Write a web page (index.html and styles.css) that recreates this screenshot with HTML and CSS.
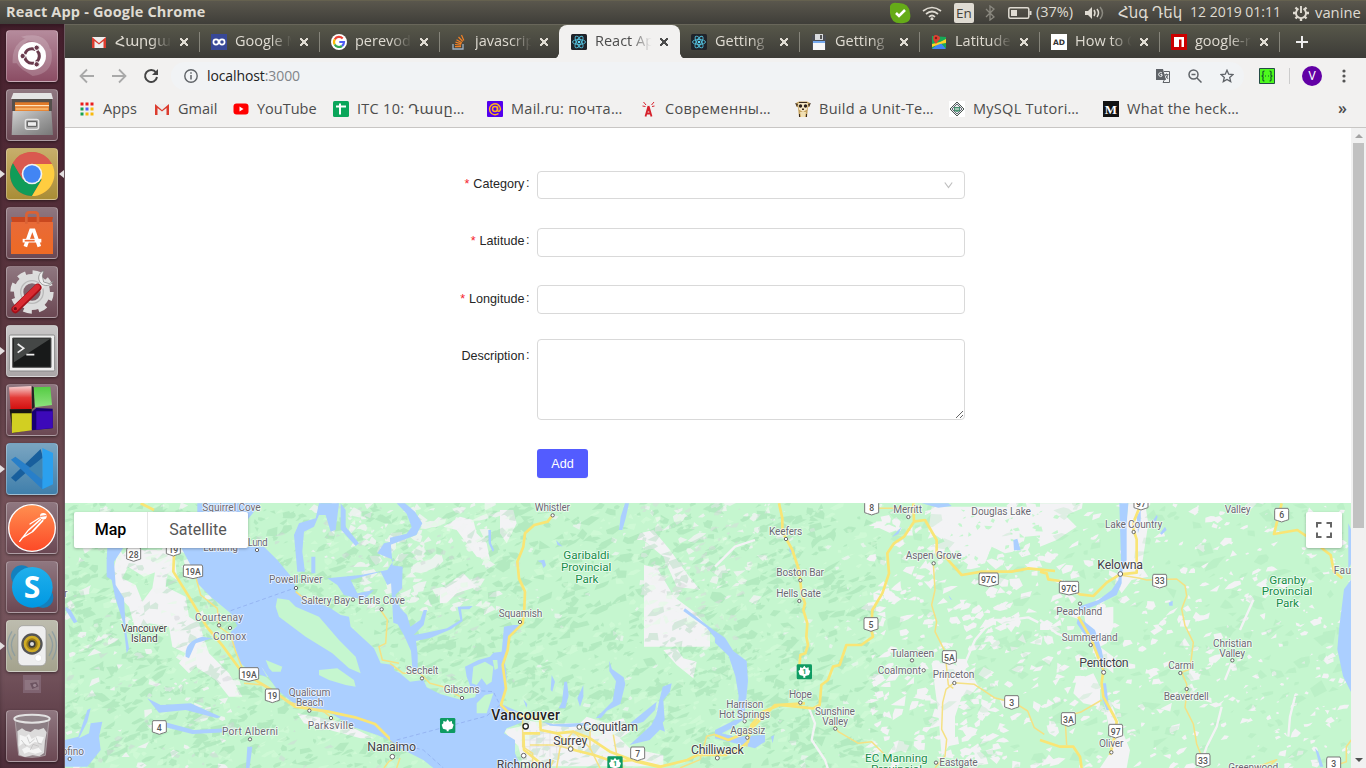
FILE: index.html
```html
<!DOCTYPE html>
<html lang="en">
<head>
<meta charset="utf-8">
<title>React App</title>
<link rel="stylesheet" href="styles.css">
</head>
<body>
<header class="panel">
  <span class="panel-title">React App - Google Chrome</span>
  <div class="tray">
    <svg class="i-skype" width="22" height="22" viewBox="0 0 22 22"><path d="M1 4Q3 0 8 1Q20 0 21 11Q23 20 15 21Q2 23 1 11Z" fill="#65ab18"/><path d="M7 11l3 3 6-6" fill="none" stroke="#fff" stroke-width="2.6"/></svg>
    <svg class="i-wifi" width="20" height="14" viewBox="0 0 20 14" fill="none" stroke="#dfdbd2" stroke-width="1.7"><path d="M1 5Q10-2 19 5M4 8Q10 3 16 8M7 11Q10 8 13 11"/><circle cx="10" cy="12.7" r=".7" fill="#dfdbd2"/></svg>
    <span class="lang">En</span>
    <svg class="i-bt" width="10" height="16" viewBox="0 0 10 16" fill="none" stroke="#8b8980" stroke-width="1.3"><path d="M1 4l8 8-4 3V1l4 3-8 8"/></svg>
    <svg class="i-bat" width="24" height="12" viewBox="0 0 24 12"><rect x=".8" y=".8" width="20" height="10.4" rx="1.5" fill="none" stroke="#dfdbd2" stroke-width="1.5"/><path d="M3 3h6v6H3z" fill="#dfdbd2"/><path d="M22.5 4v4" stroke="#dfdbd2" stroke-width="2"/></svg>
    <span class="pct">(37%)</span>
    <svg class="i-vol" width="20" height="14" viewBox="0 0 20 14" fill="none" stroke="#dfdbd2" stroke-width="1.5"><path d="M0 5h3l4-4v12L3 9H0z" fill="#dfdbd2" stroke="none"/><path d="M9 4q2 3 0 6M12 3q3 4 0 8"/><path d="M15 1q5 6 0 12" stroke="#8b8980"/></svg>
    <span class="date"><b class="hy">Հնգ Դեկ</b> <b>12 2019 01:11</b></span>
    <svg class="i-gear" width="16" height="16" viewBox="0 0 16 16" fill="none" stroke="#dfdbd2"><path d="M5.500 3.800a5 5 0 1 0 5 0M8 1v7" stroke-width="1.900"/><path d="M2.500 2.500l2 2M13.500 2.500l-2 2M0 8h3M13 8h3M2.500 13.500L4.500 11.500M13.500 13.500L11.500 11.500M8 13v3" stroke-width="2.400"/></svg>
    <span class="user">vanine</span>
  </div>
</header>

<div class="desktop">
<nav class="launcher">
  <div class="app a-dash"><svg viewBox="0 0 156 156"><g fill="#fff" fill-opacity=".18"><path d="M20 100Q15 20 100 18Q45 30 40 78L36 100zM45 20Q130 0 135 75L120 90Q125 40 70 32zM135 55Q150 130 80 138L60 125Q115 120 120 70zM120 110Q70 160 25 90L38 85Q60 130 110 115z"/></g><circle cx="78" cy="78" r="42" fill="#fff"/><circle cx="78" cy="78" r="22" fill="none" stroke="#6a3b4d" stroke-width="9" stroke-dasharray="40 6" stroke-dashoffset="18"/><g fill="#6a3b4d" stroke="#fff" stroke-width="3"><circle cx="50" cy="78" r="8"/><circle cx="92" cy="53" r="8"/><circle cx="92" cy="103" r="8"/></g></svg></div>
  <div class="app a-plum"><svg viewBox="0 0 156 156"><path d="M22 12h114l5 18H15z" fill="#e4e4e4"/><path d="M18 30h120v36H18z" fill="#55504c"/><path d="M27 40h102v31H27z" fill="#e17a28"/><path d="M27 48h102v4H27z" fill="#ffe3bd"/><path d="M29 56h98v8H29z" fill="#f7b064"/><path d="M20 66h116l5 72H17z" fill="url(#gGrey)"/><rect x="58" y="91" width="40" height="30" rx="6" fill="#aaa" stroke="#e6e6e6" stroke-width="4"/><path d="M64 98h28v14H64z" fill="#eee" stroke="#555" stroke-width="3"/></svg></div>
  <div class="app a-gold"><svg viewBox="0 0 156 156"><circle cx="78" cy="78" r="66" fill="#db4a3e"/><path d="M21 45A66 66 0 0 0 78 144L107 95 78 78 51 95z" fill="#109c58"/><path d="M78 144A66 66 0 0 0 138 48H78l29 47z" fill="#ffcd40"/><path d="M21 45L51 95 78 48H138Q118 12 78 12T21 45z" fill="#d9594f"/><circle cx="78" cy="78" r="31" fill="#f2f2f2"/><circle cx="78" cy="78" r="26" fill="#4285f4"/></svg><i class="pip left"></i><i class="pip right"></i></div>
  <div class="app a-plum"><svg viewBox="0 0 156 156"><path d="M15 30h126l-4 18H19z" fill="#c9481f"/><path d="M15 45h126v96H15z" fill="url(#gOrange)"/><path d="M61 50V26Q61 16 70 16H87Q96 16 96 26V50" fill="none" stroke="#d96235" stroke-width="8"/><path d="M58 119L75 70h8l17 49" fill="none" stroke="#fff" stroke-width="11"/><path d="M50 101h56" stroke="#fff" stroke-width="11"/><path d="M56 101h30" stroke="#ef6b35" stroke-width="5"/></svg></div>
  <div class="app a-plum"><svg viewBox="0 0 156 156"><circle cx="78" cy="78" r="56" fill="none" stroke="#dedede" stroke-width="18" stroke-dasharray="24 19.980"/><circle cx="78" cy="78" r="40" fill="none" stroke="#dcdcdc" stroke-width="28"/><circle cx="78" cy="78" r="34" fill="none" stroke="#b9b9b9" stroke-width="4"/><path d="M95 70L118 46" stroke="#e5e5e5" stroke-width="18"/><path d="M113 14a23 23 0 1 0 29 31l-12 8-17-5-4-18z" fill="#ededed" stroke="#777" stroke-width="2"/><path d="M28 130L95 65" stroke="#a50f18" stroke-width="23" stroke-linecap="round"/><path d="M28 128L94 63" stroke="#d92a31" stroke-width="16" stroke-linecap="round"/><circle cx="28" cy="128" r="5" fill="#741018"/></svg></div>
  <div class="app a-silver"><svg viewBox="0 0 156 156"><rect x="10" y="30" width="136" height="108" rx="4" fill="#eee" stroke="#888" stroke-width="3"/><path d="M20 39h115v88H20z" fill="#181a1a" stroke="#555" stroke-width="3"/><path d="M24 42h108L24 112z" fill="#444746"/><path d="M35 57l18 13-18 13M61 89h24" fill="none" stroke="#eee" stroke-width="5"/></svg><i class="pip left"></i></div>
  <div class="app a-plum"><svg viewBox="0 0 156 156"><path d="M9 10l68-4V75L14 76z" fill="url(#gRed)"/><path d="M83 10l50-2 5 55-52 7z" fill="url(#gGreen)"/><path d="M11 76l66-1v61l-57 12z" fill="#171513"/><path d="M17 88h60v51l-59 8z" fill="#d2cf22"/><path d="M78 83l13-11 49 2v59l-62 6z" fill="#180072"/><path d="M91 82h49v50l-49 5z" fill="#3c09b9"/><path d="M78 75l8-5-3-60-6-4z" fill="#232323"/></svg></div>
  <div class="app a-blue"><svg viewBox="0 0 156 156"><path d="M15 104L104 18l7 26-82 72z" fill="#185f9d"/><path d="M15 50l13-9 112 82-31 16z" fill="#287fc9"/><path d="M109 15l32 15v94l-32 15z" fill="#2ba0ee"/><path d="M109 45v65L68 77z" fill="#4085b2"/></svg><i class="pip left"></i></div>
  <div class="app a-plum"><svg viewBox="0 0 156 156"><circle cx="78" cy="78" r="70" fill="url(#gPost)" stroke="#fff" stroke-width="4"/><g fill="none" stroke="#fff" stroke-linecap="round"><circle cx="112" cy="43" r="10" fill="#fff" stroke="none"/><path d="M103 53L68 84M110 56L80 88" stroke-width="5"/><path d="M72 66L100 48M66 86L41 118M78 90L48 108" stroke-width="4"/><path d="M104 43l16-2" stroke="#ff7040" stroke-width="3"/></g></svg></div>
  <div class="app a-plum"><svg viewBox="0 0 156 156"><circle cx="47" cy="45" r="32" fill="#1480bd"/><circle cx="111" cy="110" r="31" fill="#1480bd"/><circle cx="79" cy="79" r="61" fill="url(#gSky)"/><text x="78" y="111" class="skype-s">S</text></svg></div>
  <div class="app a-sand"><svg viewBox="0 0 156 156"><g fill="none" stroke="#8197a0" stroke-width="4" opacity=".7"><path d="M28 42Q5 75 27 108M18 34Q-8 75 17 119M128 42Q151 75 129 108M138 34Q164 75 139 119"/></g><rect x="36" y="17" width="84" height="120" rx="15" fill="#eee" stroke="#999" stroke-width="2"/><circle cx="78" cy="72" r="32" fill="#555"/><circle cx="78" cy="72" r="25" fill="#d1ad25"/><circle cx="78" cy="72" r="17" fill="#9b7b16"/><circle cx="78" cy="72" r="11" fill="#3b3b3b"/><circle cx="78" cy="72" r="6" fill="#ddd"/><circle cx="97" cy="114" r="10" fill="#fff" stroke="#ccc"/></svg><i class="pip left"></i></div>
  <div class="mini"><svg viewBox="0 0 54 54"><path d="M5 15h43v30H5z" fill="#a08b98"/><path d="M21 25l19-4 7 13-19 8z" fill="#6c5867"/><circle cx="35" cy="31" r="5" fill="#b5a5b1"/></svg></div>
  <div class="app a-plum trash"><svg viewBox="0 0 156 156"><path d="M27 28h102l-11 108q-40 12-80 0z" fill="#8b7d83" stroke="#bcb3b7" stroke-width="2"/><path d="M34 64l14-9 11 7 15 4 12-9 12 2 15-5 9 13-5 25-3 37-14 10-20-3-23 5-17-6-4-28z" fill="#dcdbdb"/><path d="M41 74l17 6 11-8 8 15 17-9 20 4-8 18-20-4-17 11-18-7-11 9zM48 118l15-8 17 9 18-6 10 12-20 6-20-5-13 5z" fill="#f5f5f5"/><path d="M63 80l8 20 15-13M90 82l7 18 10 3M60 108l-14-18M73 120l8-17 18 6" fill="none" stroke="#bbb" stroke-width="2"/><ellipse cx="78" cy="26" rx="53" ry="12" fill="#918489" stroke="#e3e2e2" stroke-width="6"/></svg></div>
</nav>

<main class="browser">
  <div class="tabs">
    <div class="tab"><svg viewBox="0 0 16 16"><use href="#gmail"/></svg><span class="hy">Հարցա</span><i></i></div>
    <div class="tab"><svg viewBox="0 0 16 16"><path fill="#384897" d="M0 0h16v16H0z"/><g fill="none" stroke="#fff" stroke-width="1.700"><circle cx="5" cy="8" r="2.600"/><circle cx="11" cy="8" r="2.600"/></g></svg><span>Google M</span><i></i></div>
    <div class="tab"><svg viewBox="0 0 16 16"><circle cx="8" cy="8" r="8" fill="#fff"/><g fill="none" stroke-width="2.200"><path d="M3.800 5.300A5 5 0 0 1 11.700 4.500" stroke="#ea4335"/><path d="M3.700 10.500A5 5 0 0 1 3.800 5.300" stroke="#fbbc05"/><path d="M3.700 10.500A5 5 0 0 0 11 12" stroke="#34a853"/><path d="M11 12A5 5 0 0 0 13 8H8.300" stroke="#4d5cf5"/></g></svg><span>perevod</span><i></i></div>
    <div class="tab nosep"><svg viewBox="0 0 16 16"><path d="M2 10v5h10v-5" fill="none" stroke="#9fb1c4" stroke-width="1.300"/><path d="M4 12.700h6M4 10.500l6 .6M4.500 8.200l6 1.600M5.500 5.700l5.300 3.100M7.500 3l4.200 4.500M10.500 1l2.300 5.500" stroke="#f28025" stroke-width="1.200"/></svg><span>javascrip</span><i></i></div>
    <div class="tab active"><svg viewBox="0 0 16 16"><use href="#react"/></svg><span>React Ap</span><i></i></div>
    <div class="tab"><svg viewBox="0 0 16 16"><use href="#react"/></svg><span>Getting</span><i></i></div>
    <div class="tab"><svg viewBox="0 0 16 16"><path d="M1 1h14v15H1z" fill="#4b4d52"/><path d="M4 0h8v6H4z" fill="#d8dadd"/><path d="M9 1h2v4H9z" fill="#555"/><path d="M2 8h12v8H2z" fill="#f7f7f7"/><path d="M2 7h12v2H2z" fill="#75a9ed"/></svg><span>Getting</span><i></i></div>
    <div class="tab"><svg viewBox="0 0 16 16"><path d="M1 2l14 1v11l-14 1z" fill="#18a957"/><path d="M1 15L9 8l6 7z" fill="#4285f4"/><path d="M1 10l8-2 6-3v4l-6 1-8 3z" fill="#ffd327"/><path d="M5 10Q1 5 2.500 2.500T7.500 2 7 7z" fill="#de4033"/><circle cx="5" cy="4" r="1.200" fill="#851b16"/></svg><span>Latitude</span><i></i></div>
    <div class="tab"><svg viewBox="0 0 16 16"><path fill="#fff" d="M0 0h16v16H0z"/><text x="8" y="11" class="ad">AD</text></svg><span>How to C</span><i></i></div>
    <div class="tab"><svg viewBox="0 0 16 16"><path fill="#cb0000" d="M0 0h16v16H0z"/><path fill="#fff" d="M3 3h10v10h-2.500V5.500H8V13H3z"/></svg><span>google-r</span><i></i></div>
    <svg class="plus" width="12" height="12" viewBox="0 0 12 12"><path d="M6 0v12M0 6h12" stroke="#eee" stroke-width="2"/></svg>
  </div>

  <div class="toolbar">
    <svg class="nav-ic" viewBox="0 0 16 16"><path d="M15 8H2M8 1.500L1.500 8 8 14.500" stroke="#a9a9a9"/></svg>
    <svg class="nav-ic" viewBox="0 0 16 16"><path d="M1 8h13M8 1.500L14.500 8 8 14.500" stroke="#a9a9a9"/></svg>
    <svg class="nav-ic reload" viewBox="0 0 16 16"><path d="M13 4.500A6 6 0 1 0 14 9" stroke="#444" stroke-width="2"/><path d="M15 1v6H9z" fill="#444" stroke="none"/></svg>
    <div class="omnibox">
      <svg width="14" height="14" viewBox="0 0 14 14"><circle cx="7" cy="7" r="6.200" fill="none" stroke="#5f6368" stroke-width="1.400"/><path d="M7 6v4.500M7 3.300v1.500" stroke="#5f6368" stroke-width="1.500"/></svg>
      <span class="url">localhost<em>:3000</em></span>
      <svg class="o-tr" width="14" height="14" viewBox="0 0 14 14"><path d="M0 0h7l3 11H0z" fill="#5f6368"/><path d="M8 2.500h5.500v11H7l1.500-3" fill="none" stroke="#5f6368"/><path d="M6 4a2 2 0 1 0 0 3V5.500H4.500" fill="none" stroke="#f1f3f4"/><path d="M8.500 5.500h4M10.500 4.500v1M12 5.500Q11 9 9.500 9.500M9.500 6l2.500 4" fill="none" stroke="#5f6368" stroke-width=".9"/></svg>
      <svg class="o-zm" width="14" height="14" viewBox="0 0 14 14" fill="none" stroke="#5f6368" stroke-width="1.500"><circle cx="5.500" cy="5.500" r="4.500"/><path d="M9 9l4.500 4.500M3.500 5.500h4"/></svg>
      <svg width="14" height="14" viewBox="0 0 14 14"><path d="M7 1.200l1.700 4 4.300.4-3.300 2.800 1 4.200L7 10.400l-3.700 2.200 1-4.200L1 5.600l4.300-.4z" fill="none" stroke="#5f6368" stroke-width="1.300"/></svg>
    </div>
    <svg class="ext" width="16" height="16" viewBox="0 0 16 16"><path d="M.5.5h15v15H.5z" fill="#4df91d" stroke="#244b45"/><path d="M5.500 3q-2 0-1.500 2.500T2.500 8q2 0 1.500 2.500T5.500 13M10.500 3q2 0 1.500 2.500T13.500 8q-2 0-1.500 2.500T10.500 13M6 8h1M9 8h1" fill="none" stroke="#155a2a" stroke-width="1.200"/></svg>
    <span class="vsep"></span>
    <span class="avatar">V</span>
    <svg class="dots" width="4" height="14" viewBox="0 0 4 14" fill="#555"><circle cx="2" cy="2" r="1.600"/><circle cx="2" cy="7" r="1.600"/><circle cx="2" cy="12" r="1.600"/></svg>
  </div>

  <div class="bookmarks">
    <a class="bm w75"><svg viewBox="0 0 16 16"><path d="M1.500 1.500h3v3h-3zM6.500 1.500h3v3h-3zM11.500 1.500h3v3h-3z" fill="#ea1d1d"/><path d="M1.500 6.500h3v3h-3zM1.500 11.500h3v3h-3z" fill="#16a150"/><path d="M6.500 6.500h3v3h-3z" fill="#5260f2"/><path d="M11.500 6.500h3v3h-3zM6.500 11.500h3v3h-3zM11.500 11.500h3v3h-3z" fill="#f8b90c"/></svg><span>Apps</span></a>
    <a class="bm w79"><svg viewBox="0 0 16 16"><use href="#gmail"/></svg><span>Gmail</span></a>
    <a class="bm w100"><svg viewBox="0 0 16 16"><rect x=".5" y="2.500" width="15" height="11" rx="3" fill="#f00"/><path d="M6.500 5.500v5l4-2.500z" fill="#fff"/></svg><span>YouTube</span></a>
    <a class="bm"><svg viewBox="0 0 16 16"><rect width="16" height="16" rx="1.500" fill="#0aa65a"/><path d="M3 5.500h10M7 2.500v11" stroke="#fff" stroke-width="2"/></svg><span>ITC 10: Դասը…</span></a>
    <a class="bm"><svg viewBox="0 0 16 16"><rect width="16" height="16" rx="1" fill="#5300ee"/><g fill="none" stroke="#ffb31a" stroke-width="1.500"><circle cx="8" cy="8" r="2.500"/><path d="M10.500 5.500v4q2 2 3-1.500A5.500 5.500 0 1 0 11.500 12.500"/></g></svg><span>Mail.ru: почта…</span></a>
    <a class="bm"><svg viewBox="0 0 16 16" fill="none" stroke="#d6202b"><path d="M7.500 5L4.500 15.500M7.500 5l3 10.500M6 9.500h3.500M5.500 12.500h4" stroke-width="1.800"/><path d="M5 4L2.500 1M4.500 5.500L1.500 5M10.500 4L13 1M11 5.500l2.500-.5" stroke-width="1"/></svg><span>Современны…</span></a>
    <a class="bm"><svg viewBox="0 0 16 16"><path d="M1 2l3-1.500h8L15 2v3l-2 1.500L12 16H4L3 6.500 1 5z" fill="#c6a25e"/><path d="M3 2.500Q8-1 13 2.500l-1 6-4 2.500-4-2.500z" fill="#f4e6c4"/><path d="M0 2l3 1-1 3zM16 2l-3 1 1 3z" fill="#4b3b2b"/><path d="M5 11h6l-1 5H6z" fill="#f0dfb3"/><circle cx="5.500" cy="5" r="1.700" fill="#2c211b"/><circle cx="10.500" cy="5" r="1.700" fill="#2c211b"/><path d="M7 7.500h2v1.500H7zM4 1h8v1H4zM4 13h1v3H4zM11 13h1v3h-1z" fill="#3a2b1c"/></svg><span>Build a Unit-Te…</span></a>
    <a class="bm"><svg viewBox="0 0 16 16"><path fill="#fff" d="M0 0h16v16H0z"/><path d="M8 1l7 7-7 7-7-7z" fill="#e7ece9" stroke="#4b5551"/><path d="M8 3l5 5-5 5-5-5z" fill="none" stroke="#667"/><path d="M5 6h6v4l-3 1-3-1z" fill="#489171"/><path d="M6 8h4" stroke="#fff"/></svg><span>MySQL Tutori…</span></a>
    <a class="bm"><svg viewBox="0 0 16 16"><path fill="#131313" d="M0 0h16v16H0z"/><text x="8" y="12.500" class="medium">M</text></svg><span>What the heck…</span></a>
    <span class="more">»</span>
  </div>

  <div class="viewport">
    <div class="page">
      <form class="form">
        <div class="row r1"><label class="req">Category</label><div class="field select"><svg width="9" height="9" viewBox="0 0 9 9"><path d="M.8 1.500l3.700 5 3.700-5" fill="none" stroke="#bfbfbf" stroke-width="1.200"/></svg></div></div>
        <div class="row r2"><label class="req">Latitude</label><input class="field"></div>
        <div class="row r3"><label class="req">Longitude</label><input class="field"></div>
        <div class="row r4"><label>Description</label><textarea class="field area"></textarea></div>
        <button type="button" class="add">Add</button>
      </form>

      <section class="map">
        <svg class="map-art" viewBox="65 503 1286 265">
          <rect x="65" y="503" width="1286" height="265" fill="#c5f6cf"/>
          <g class="snow">
            <path transform="translate(64 500) scale(.33333)" d="M165 145l30 50-20 40 40 20 20 50 30-40 10-60 40-5-10 60 60 30 10 60 30 20 30 90 60 60 40 70-40 0-40-50-60-40-20 20-30-30 20-30-40-20-10-60-60-10-40 20-20-70-40-40-10-60zM160 180l30-30 140 0 10 90-50-30-50 20zM540 445l45 20 25 50-50-20zM700 640l130 25 100 50-40 0-170-45z"/>
            <path transform="translate(390 500) scale(.33333)" d="M762 195l40 10 50 85 60 45 48 55v50H762zM340 690l50-10 10-20 70 10 100 0 20-20 60 20 50-15 20 40-30 20 30 30 100 20 0 34H400l-15-60-30-30zM160 80l50-30 40 10 10 40 30 30 10 50-40-10-60-80zM150 270l70-50 40 40-60 20-30 30-20 0zM330 30l40 0 10 40-30 60-20-30zM750 100l40-10 50 60 50 70 40 50-70-10-40-90-60-50-20 0zM820 450l40-5 20 30 40 10-10 50-50-40z"/>
            <path transform="translate(715 500) scale(.33333)" d="M650 20H990v85l-60 5-10 40-50 10-40-20-20 50-40 10-30-20-30-20-30-50-40-15zM650 490l60 0 60 30 20 40-50 30-20 60 0 60-40 60-10-130z"/>
            <path transform="translate(1040 500) scale(.33333)" d="M0 10h110l-30 40 30 30-60 40-50 20zM265 10h50l10 60-20 130 20 30-50 10-30 40-20-30 20-80 10-60zM130 330l90-10 0 60-20 50-20 10 40 30 0 50-50-40-30-90zM110 540l50-20 20 40 0 60-50-10-30-30zM190 600l20 0 20 50 40 100-10 54H180l40-60z"/>
          </g>
          <g id="terrain"></g>
          <g transform="translate(64 500) scale(.33333)">
            <g class="water">
              <path d="M352 144L385 205 400 250 440 290 500 340 520 378 500 395 505 420 530 490 560 515 610 532 592 500 640 570 700 618 800 640 870 682 940 705 990 727V495L950 490 930 445 860 380 855 350 830 345 800 325 740 300 695 275 690 240 640 180 600 140 550 140 550 60 590 10H400V144Z"/>
              <path d="M130 140h50l-30 45 5 70 25 40 5 90 10 60-7 15-10-90-25-80-10-50-15-10 0-50z"/>
              <path d="M700 215l-10-110 15-35 50-15 10-45h60l-10 80-15 5-15-50-20 0-15 35-30 15-5 60 8 60zM830 10l15 20 0 50 40 50-10 8-45-50zM940 160l20-30 20-5 10 120-20 10-20-40-90 25 20 40 50-10-30 30-60-15-20-30-30-20 100-10 80-15 20-30z"/>
              <path d="M742 170h12v50h-12zM250 595l40 20 90-5 90 40-10 5-95-25-80 8zM280 660l110 30 100-5-5 12-100 5-80-20-30-5zM550 740l15 0-10 75h-10zM365 470q-5-45 50-60l30 5-50 15-20 45zM70 630l10-5-10 40-25 50 30-15 5-30 35-5-10 45 5 40-40 50H3V720l40-10zM5 320l15 10 20 35-10 5-25-40z"/>
            </g>
            <path class="land" d="M640 295l35 5 20 20 70 30 60 70 50 50 15 50-35-15-50-45-80-50-80-60-10-30zM765 510l55-5 50 35 5 20-30-5-50-15-30-15zM605 480l50 20-5 15-25 0-10-10z"/>
            <path d="M500 332L690 265" class="ferry"/>
            <g class="road"><path class="w" d="M230 10l40 20M330 165l-2 50 50 80 50 85 50 60 55 75 90 55 70 50 100 15 80 17 60 20 60 60 30 18"/><path d="M395 230l15 55 50 40 5 55 35 25 15 50 20 50M540 550l60 5 70 50 110 30 30 25M695 275l25 20 60 10M950 330l20 30-5 70-20 10 10 40 50 10M960 804l15-20 10-5"/></g>
            <g class="pt"><circle cx="579" cy="150" r="5"/><circle cx="696" cy="264" r="5"/><circle cx="867" cy="299" r="5"/><circle cx="953" cy="328" r="5"/><circle cx="465" cy="376" r="5"/><circle cx="498" cy="384" r="5"/><circle cx="736" cy="632" r="5"/><circle cx="801" cy="654" r="5"/><circle cx="558" cy="718" r="5"/><circle cx="17" cy="777" r="5"/></g>
            <g class="s"><text x="415" y="34" textLength="175">Squirrel Cove</text><text x="418" y="152" textLength="104">Landing</text><text x="551" y="138" textLength="60">Lund</text><text x="615" y="248" textLength="160">Powell River</text><text x="712" y="311" textLength="146">Saltery Bay</text><text x="393" y="362" textLength="144">Courtenay</text><text x="447" y="419" textLength="100">Comox</text><text x="674" y="588" textLength="125">Qualicum</text><text x="696" y="618" textLength="82">Beach</text><text x="731" y="688" textLength="138">Parksville</text><text x="474" y="704" textLength="168">Port Alberni</text><text x="-7" y="766" textLength="67">ofino</text><text x="0" y="290">r</text></g>
            <g class="s dark"><text x="172" y="396" textLength="137">Vancouver</text><text x="201" y="426" textLength="80">Island</text></g>
            <g class="shield"><use href="#s2" x="209" y="163"/><text x="209" y="173">28</text><use href="#s2" x="328" y="147"/><text x="328" y="158">19</text><use href="#s3" x="387" y="215"/><text x="387" y="225">19A</text><use href="#s3" x="555" y="523"/><text x="555" y="533">19A</text><use href="#s2" x="625" y="587"/><text x="625" y="598">19</text><use href="#s2" x="286" y="682"/><text x="286" y="693">4</text></g>
          </g>
          <g transform="translate(390 500) scale(.33333)">
            <g class="water">
              <path d="M0 505L30 520 60 545 100 540 110 562 150 582 215 600 255 592 265 565 245 570 230 530 225 500 265 480 300 470 310 458 335 455 342 380 370 375 388 375 384 390 360 410 350 450 345 490 350 530 348 570 330 610 395 640 400 665 350 685 342 700 375 720 375 760 395 804H130L100 780 60 760 30 745 0 720Z"/>
              <path d="M20 10h25l30 25 22 35-18 35-40 15-39 15v-22l50-12 15-20-15-40zM0 195l38 5-2 65-20 20 15 40 20 20 10 35 30-20 10-30 10 0-10 45-30 30 30-5 70-15 40-25-8-40 45-2-10 10-25 0 5 35-35 25-60 25-45 10 5 40 0 55-15 0-5-65-20-45-20-35-13-5zM705 10l12 0-10 45-10 35-10 0 5-40zM885 325l105 80v28l-40-50-70-50zM295 90l8 0 0 40 10 20-5 5-12-25zM498 120l20 20-15-5zM443 182l20-3 5 17-8 8-5-15zM658 482l8 25 35 25 5 20-15 60-40 20-18 22-15 0 30-30 20-20 10-60-20-30zM818 560l27-10-5 25-20 25 4 60-15 20 0 10-30 30-60 15 65-60 15-30 8-40zM720 670l80-65-5 25-35 35-30 10zM800 680l5-30 10 5 10 40-25-10zM523 545h8l5 40-10 40-20 0 10-20zM580 555v35l-10 30-8-25zM485 525l10 20-8 30-5-5zM400 598l12 15-3 10zM460 665l30 8 100-5 10 8-60 5-60-4z"/>
            </g>
            <path class="land" d="M250 500l35-15 25 15-5 45-15 10-15-20-15 20-15-5zM308 480h14l2 25-10 5zM260 610l25-25 25-5-10 30-10 30-30 0z"/>
            <g class="grid"><path d="M420 690v80M440 690v80M460 690v80M480 690v80M500 690v80M400 700h150M400 720h150M400 740h150"/></g>
            <path d="M20 720L290 648 330 615 310 575 265 572M0 725l100 25 60 54" class="ferry"/>
            <g class="road"><path class="w" d="M488 45l-15 20-40 10-28 25-5 40-18 45 5 50 18 40-2 50-5 45-40 40-5 40-15 45 10 70-15 50 20 20 55 15 40 5M450 650l2 40 50 10 50 50 60 15 60 20 60-5 80 20 80-20 30-15 90 0M450 700l-50 0 2 50 50 40M500 700l50-5 50 20 60 40 80 30 65 15"/><path d="M398 640v100l30 20 0 44M500 804l10-60 40-50 50 50 30 60M420 735l80 0 50 15M600 690v60M700 804l-20-40-10-60M0 490l40 30 50 0 30 30 40 10 50 30M490 780l-10 24M20 804l10-30M870 804l60-25 20-70 40-10"/></g>
            <g class="pt"><circle cx="488" cy="46" r="5"/><circle cx="390" cy="366" r="5"/><circle cx="96" cy="535" r="5"/><circle cx="216" cy="594" r="5"/><circle class="big" cx="407" cy="679" r="8"/><circle cx="568" cy="681" r="7"/><circle cx="542" cy="747" r="7"/><circle cx="401" cy="767" r="7"/><circle cx="7" cy="770" r="7"/></g>
            <g class="s"><text x="-95" y="311" textLength="140">Earls Cove</text><text x="434" y="34" textLength="106">Whistler</text><text x="326" y="351" textLength="131">Squamish</text><text x="48" y="523" textLength="97">Sechelt</text><text x="161" y="580" textLength="108">Gibsons</text></g>
            <g class="p"><text x="520" y="178" textLength="138">Garibaldi</text><text x="513" y="214" textLength="151">Provincial</text><text x="556" y="249" textLength="69">Park</text></g>
            <g class="c"><text class="van" x="304" y="661" textLength="206">Vancouver</text><text x="580" y="694" textLength="164">Coquitlam</text><text x="490" y="734" textLength="102">Surrey</text><text x="320" y="807" textLength="164">Richmond</text><text x="-68" y="753" textLength="146">Nanaimo</text></g>
            <g class="shield"><use href="#s2" x="743" y="761"/><text x="743" y="771">7</text></g>
            <use href="#leaf" x="173" y="676"/><use href="#leaf" x="675" y="791"/><text class="leaf-n" x="675" y="799">1</text>
          </g>
          <g transform="translate(715 500) scale(.33333)">
            <g class="water"><path d="M0 393l30 20 25 40 40 30 4 60-8 80-5 35-20-10 5-60-10-60-20-60-41-40zM620 10h80l10 8-40 5zM895 120l12-4 10 35-20 0zM700 285l12 15-6-2zM0 690l60-30 30-5-40 30-30 15 40 10 90-5 0 20-30 20-40-10-80-20zM168 710l10-5-5 25zM560 80l-10 22-20 10zM220 110l10 50-6-4z"/></g>
            <path class="pale" d="M750 490l30-70 50-60 50 0 60-8 30 15M280 620l20 50-10 50 40 60 10 30M0 200l60-60 60-20"/>
            <g class="road"><path class="w" d="M192 10l10 45 0 40 30 55 20 60 8 70 10 30-5 20 12 40-3 40 5 25-8 25-15 5-5 60M595 10l2 55-30 45-30 20-20 30 5 60-20 60-30 50-3 60 5 20-35 25-45 0-20 60-20 5-15 40-20 15-5 60-20 10-100-10-50 20-35 40-10 50-35 30H0M595 65l35-5 35 60 0 45 30 10 45 50 60-10 90 0 50-10 80 8M0 705l40 15 60-25 80-80 90-5"/><path d="M655 190l5 80-10 45 15 50-5 30 30 60 10 100 15 10M718 548l-25 20-10 40-3 80 15 30-5 50-30 36M718 548l60 5 60 40 60 15 40 25 20 50 30 20M340 650l30 45 60 35 40-5 50 50M480 25l110 0M95 740l5-30"/></g>
            <g class="pt"><circle cx="580" cy="51" r="5"/><circle cx="213" cy="117" r="5"/><circle cx="256" cy="241" r="5"/><circle cx="253" cy="303" r="5"/><circle cx="656" cy="190" r="5"/><circle cx="591" cy="481" r="5"/><circle cx="626" cy="511" r="5"/><circle cx="718" cy="549" r="5"/><circle cx="256" cy="608" r="5"/><circle cx="361" cy="686" r="5"/><circle cx="89" cy="664" r="5"/><circle cx="97" cy="713" r="5"/><circle cx="7" cy="774" r="6"/><circle cx="663" cy="788" r="5"/></g>
            <g class="s"><text x="535" y="38" textLength="86">Merritt</text><text x="769" y="44" textLength="179">Douglas Lake</text><text x="162" y="105" textLength="100">Keefers</text><text x="572" y="178" textLength="168">Aspen Grove</text><text x="184" y="227" textLength="143">Boston Bar</text><text x="184" y="292" textLength="134">Hells Gate</text><text x="527" y="470" textLength="130">Tulameen</text><text x="488" y="521" textLength="130">Coalmont</text><text x="653" y="535" textLength="125">Princeton</text><text x="222" y="594" textLength="69">Hope</text><text x="34" y="624" textLength="111">Harrison</text><text x="12" y="654" textLength="153">Hot Springs</text><text x="300" y="645" textLength="120">Sunshine</text><text x="322" y="675" textLength="77">Valley</text><text x="46" y="702" textLength="105">Agassiz</text><text x="673" y="798" textLength="115">Eastgate</text></g>
            <g class="c"><text x="-72" y="762" textLength="158">Chilliwack</text></g>
            <g class="p"><text x="450" y="785" textLength="188">EC Manning</text><text x="468" y="819" textLength="153">Provincial</text></g>
            <g class="shield"><use href="#s2" x="470" y="24"/><text x="470" y="34">8</text><use href="#s2" x="468" y="373"/><text x="468" y="383">5</text><use href="#s3" x="821" y="239"/><text x="821" y="249">97C</text><use href="#s2" x="703" y="472"/><text x="703" y="482">5A</text><use href="#s2" x="890" y="607"/><text x="890" y="617">3</text></g>
            <use href="#leaf" x="268" y="515"/><text class="leaf-n" x="268" y="523">1</text>
          </g>
          <g transform="translate(1040 500) scale(.33333)">
            <g class="water"><path d="M238 10h27l-5 60 0 110-15 40 0 30-15 35-60 30-50 20-5-15 60-20 40-30 20-30 8-60zM115 350l50 40 20 60 10 50 0 25-10-5-10-50-30-50-35-50zM188 550l10 0 10 80-8 0-12-30zM290 50l12-20 0 40-8 30zM360 100l15-20 5 10-15 14zM340 60l10-15 3 5-10 25zM386 308l12-6 0 15-10 0zM934 250v328l-25-50-17-80 5-60 10-80 5-40 22-30zM925 70l9 20v100l-9 20 0-60zM825 745l10 10 15 45-10 0z"/></g>
            <path class="pale" d="M545 620l-15 60-30 60-10 30M765 590l-15 60-5 60M0 360l50 40 50 20M575 490l-20 50M640 300l-40 90"/>
            <g class="road"><path class="w" d="M0 215l20 5 5 18 35 5 60 40 40 5 40-40 40-25 50-5 0-100-10-30 0-20 20-50M115 350l40 70 15 40 20 50-5 40 5 40 30 55 10 20-5 40-10 40-5 20M0 720l60 20 40 0 20 30 5 34M725 10l-15 60-8 32 70-12 60 40 20 20 20 15 10 50 25 20"/><path d="M240 225l60 10 20 5 90-3 25 20 5 30-15 40 10 50 25 50-10 80-25 10 15 35 0 30-5 40 25 50 10 60 15 38M185 600l-60 35-50 15 5 85M680 804l30-25-40 15-30 10M934 720l-15 20 0 45-30 10"/></g>
            <g class="pt"><circle cx="281" cy="96" r="5"/><circle cx="241" cy="222" r="7"/><circle cx="120" cy="311" r="5"/><circle cx="152" cy="435" r="5"/><circle cx="191" cy="517" r="6"/><circle cx="421" cy="519" r="5"/><circle cx="440" cy="567" r="5"/><circle cx="577" cy="481" r="5"/><circle cx="214" cy="757" r="5"/></g>
            <g class="s"><text x="554" y="38" textLength="78">Valley</text><text x="195" y="83" textLength="172">Lake Country</text><text x="49" y="346" textLength="138">Peachland</text><text x="65" y="423" textLength="168">Summerland</text><text x="385" y="507" textLength="77">Carmi</text><text x="519" y="440" textLength="117">Christian</text><text x="538" y="470" textLength="77">Valley</text><text x="371" y="599" textLength="135">Beaverdell</text><text x="177" y="742" textLength="73">Oliver</text><text x="565" y="812" textLength="150">Greenwood</text><text x="881" y="221" textLength="52">Fau</text></g>
            <g class="c"><text x="172" y="207" textLength="137">Kelowna</text><text x="118" y="502" textLength="148">Penticton</text></g>
            <g class="p"><text x="688" y="251" textLength="109">Granby</text><text x="665" y="286" textLength="152">Provincial</text><text x="708" y="321" textLength="69">Park</text></g>
            <g class="shield"><use href="#s2" x="303" y="9"/><text x="303" y="22">97</text><use href="#s2" x="725" y="45"/><text x="725" y="55">6</text><use href="#s2" x="359" y="243"/><text x="359" y="253">33</text><use href="#s3" x="87" y="264"/><text x="87" y="275">97C</text><use href="#s2" x="85" y="658"/><text x="85" y="669">3A</text><use href="#s2" x="227" y="693"/><text x="227" y="704">97</text><use href="#s2" x="489" y="781"/><text x="489" y="792">33</text><use href="#s2" x="881" y="791"/><text x="881" y="801">3</text></g>
          </g>
        </svg>
        <div class="map-type"><b>Map</b><span>Satellite</span></div>
        <div class="full"><svg width="16" height="16" viewBox="0 0 16 16"><path d="M1 5.500V1h4.500M10.500 1H15v4.500M15 10.500V15h-4.500M5.500 15H1v-4.500" fill="none" stroke="#666" stroke-width="2"/></svg></div>
      </section>
    </div>
    <div class="scroll"><i class="up"></i><div class="thumb"></div><i class="down"></i></div>
  </div>
</main>
</div>

<svg class="defs" width="0" height="0">
  <defs>
    <linearGradient id="gGrey" x2="1" y2="1"><stop stop-color="#d2d2d2"/><stop offset=".5" stop-color="#9f9f9f"/><stop offset="1" stop-color="#777"/></linearGradient>
    <linearGradient id="gOrange" x2="0" y2="1"><stop stop-color="#e86a38"/><stop offset="1" stop-color="#ee6a24"/></linearGradient>
    <linearGradient id="gRed" x2="0" y2="1"><stop stop-color="#f6d2d2"/><stop offset=".5" stop-color="#e33a36"/><stop offset="1" stop-color="#d30f0f"/></linearGradient>
    <linearGradient id="gGreen" x2="0" y2="1"><stop stop-color="#54cc43"/><stop offset="1" stop-color="#8ee27e"/></linearGradient>
    <linearGradient id="gPost" x2="0" y2="1"><stop stop-color="#ff8f50"/><stop offset="1" stop-color="#fd4927"/></linearGradient>
    <linearGradient id="gSky" x2="0" y2="1"><stop stop-color="#20b0ec"/><stop offset="1" stop-color="#0098e2"/></linearGradient>
    <symbol id="gmail" viewBox="0 0 16 16"><path d="M1 3h14v11H1z" fill="#eee"/><path d="M1 14V3l7 6 7-6v11h-2.500V7L8 10.500 3.500 7v7z" fill="#dc3c2e"/></symbol>
    <symbol id="react" viewBox="0 0 16 16"><rect width="16" height="16" rx="1.500" fill="#20232a"/><g fill="none" stroke="#53c1de" stroke-width=".9"><ellipse cx="8" cy="8" rx="6.500" ry="2.500"/><ellipse cx="8" cy="8" rx="6.500" ry="2.500" transform="rotate(60 8 8)"/><ellipse cx="8" cy="8" rx="6.500" ry="2.500" transform="rotate(120 8 8)"/></g><circle cx="8" cy="8" r="1.300" fill="#61dafb"/></symbol>
    <g id="s2"><path d="M-19-20H19L21-14V14Q14 16 0 21Q-14 16-21 14V-14Z" fill="#fff" stroke="#777" stroke-width="3"/></g>
    <g id="s3"><path d="M-27-20H27L29-14V14Q20 16 0 21Q-20 16-29 14V-14Z" fill="#fff" stroke="#777" stroke-width="3"/></g>
    <g id="leaf"><rect x="-23" y="-22" width="46" height="45" rx="4" fill="#0e9b62"/><path d="M0-18L5-11 13-13 13-6 18-2 14 10 3 13V18H-3V13L-14 10-18-2-13-6-13-13-5-11Z" fill="#fff"/></g>
  </defs>
</svg>
<script src="terrain.js"></script>
</body>
</html>
```

FILE: styles.css
```css
* { box-sizing: border-box; }
body { margin: 0; width: 1366px; height: 768px; overflow: hidden; display: flex; flex-direction: column; font-family: "Open Sans", "DejaVu Sans", sans-serif; }
svg { display: block; flex: none; }
.defs { position: absolute; }

.panel { height: 24px; flex: none; display: flex; justify-content: space-between; align-items: center; padding: 0 5px 0 6px; background: linear-gradient(#5a574d, #3f3e39); border-top: 1px solid #65614f; color: #dfdbd2; font-size: 14.5px; }
.panel-title { font-weight: 700; font-size: 14.5px; letter-spacing: .16px; line-height: 22px; padding-bottom: 2px; white-space: nowrap; }
.tray { display: flex; align-items: center; width: 472px; line-height: 22px; white-space: nowrap; }
.i-wifi { margin-left: 11px; }
.lang { margin-left: 12px; width: 20px; height: 20px; border-radius: 2px; background: #dfdbd2; color: #45433d; font-size: 13.5px; line-height: 20px; text-align: center; }
.i-bt { margin-left: 11px; }
.i-bat { margin-left: 13px; }
.pct { margin-left: 4px; width: 38px; padding-bottom: 2px; font-size: 14.5px; }
.i-vol { margin-left: 11px; }
.date { margin-left: 13px; width: 163px; padding-bottom: 2px; display: flex; justify-content: space-between; font-size: 14px; }
.date b { font-weight: 400; }
.date .hy { font-size: 15px; }
.i-gear { margin-left: 12px; }
.user { margin-left: 6px; padding-bottom: 2px; font-size: 14.8px; }

.desktop { flex: 1; display: flex; min-height: 0; }
.launcher { width: 65px; flex: none; padding: 6px 7px 6px 6px; display: flex; flex-direction: column; gap: 7px; background: linear-gradient(#47202e, #5b3740 40%, #79575e 70%, #705059 88%, #4d2d39); border-right: 1px solid #6c5960; box-shadow: inset 0 3px 4px #0004; }
.app { position: relative; width: 52px; height: 52px; flex: none; border-radius: 4px; border: 1px solid #ffffff48; box-shadow: 0 1px 3px #0007; }
.app svg { width: 52px; height: 52px; margin: -1px; }
.a-dash { background: linear-gradient(#b58b9c, #8b4d64); }
.a-plum { background: linear-gradient(#8f7780, #6b4853); }
.a-gold { background: linear-gradient(#c7ae6b, #a98d36); }
.a-silver { background: linear-gradient(#c9c7c8, #aaa6a7); }
.a-blue { background: linear-gradient(#7aa5c1, #407fab); }
.a-sand { background: linear-gradient(#bdbcae, #a4a38d); }
.skype-s { font: 700 90px "Open Sans", sans-serif; text-anchor: middle; fill: #fff; }
.pip { position: absolute; top: 21px; border: 4px solid transparent; }
.pip.left { left: -7px; border-left: 5px solid #e4dfe0; border-right: 0; }
.pip.right { right: -7px; border-right: 5px solid #e4dfe0; border-left: 0; }
.mini { width: 18px; height: 18px; margin: -4px 0 0 17px; background: #8b7180; opacity: .65; }
.trash { margin-top: auto; }

.browser { flex: 1; min-width: 0; display: flex; flex-direction: column; background: #f2f1f0; }
.tabs { height: 34px; flex: none; padding-left: 15px; display: flex; align-items: center; background: linear-gradient(#57574a, #3c3b37); border-top: 1px solid #68665a; }
.tab { position: relative; width: 120px; height: 34px; flex: none; display: flex; align-items: center; padding: 1px 8px 0 11px; color: #dfdbd2; font-size: 14.5px; }
.tab svg { width: 16px; height: 16px; margin-right: 8px; }
.tab span { width: 59px; flex: none; overflow: hidden; white-space: nowrap; line-height: 22px; padding-bottom: 2px; -webkit-mask-image: linear-gradient(90deg, #000 60%, transparent 96%); }
.tab .hy { font-size: 14.5px; letter-spacing: -.2px; }
.tab i { width: 8px; height: 8px; flex: none; margin-left: 6px; background: linear-gradient(45deg, transparent 42%, currentColor 43% 57%, transparent 58%), linear-gradient(-45deg, transparent 42%, currentColor 43% 57%, transparent 58%); }
.tab::after { content: ""; position: absolute; right: 0; top: 7px; height: 20px; border-right: 1px solid #85847a; }
.tab.nosep::after, .tab.active::after { display: none; }
.tab.active { width: 121px; color: #4c4c4c; background: #f2f1f0; border-radius: 8px 8px 0 0; margin-left: -1px; padding-left: 12px; }
.tab.active::before { content: ""; position: absolute; left: -6px; right: -6px; bottom: 0; height: 6px; background: radial-gradient(circle at 0 0, transparent 5.5px, #f2f1f0 6px) left / 6px 6px no-repeat, radial-gradient(circle at 100% 0, transparent 5.5px, #f2f1f0 6px) right / 6px 6px no-repeat; }
.plus { margin-left: 16px; }

.toolbar { height: 36px; flex: none; display: flex; align-items: center; padding-left: 14px; }
.nav-ic { width: 16px; height: 16px; margin-right: 16px; fill: none; stroke-width: 1.800; }
.reload { margin-right: 12px; }
.omnibox { width: 1073px; height: 28px; flex: none; display: flex; align-items: center; margin-right: 15px; padding: 0 10px 0 13px; border-radius: 14px; background: #f1f3f5; }
.url { margin-left: 9px; color: #222; font-size: 14px; letter-spacing: -.1px; line-height: 26px; }
.url em { color: #818589; font-style: normal; }
.o-tr { margin-left: auto; }
.o-zm { margin: 0 18px; }
.vsep { height: 16px; border-left: 1px solid #ccc; margin: 0 12px 0 14px; }
.avatar { width: 20px; height: 20px; flex: none; border-radius: 50%; background: #6200a5; color: #fff; font: 12px/20px Roboto, sans-serif; text-align: center; }
.dots { margin-left: 20px; }

.bookmarks { height: 34px; flex: none; display: flex; align-items: center; padding: 0 0 4px 14px; border-bottom: 1px solid #c8c6c4; color: #4c4c4c; font-size: 14.5px; }
.bm { width: 154px; flex: none; display: flex; align-items: center; gap: 8px; white-space: nowrap; line-height: 22px; letter-spacing: .28px; }
.bm svg { width: 16px; height: 16px; }
.w75, .w79, .w100 { letter-spacing: 0; }
.w75 { width: 75px; } .w79 { width: 79px; } .w100 { width: 100px; }
.more { margin-left: 81px; padding-bottom: 2px; font-size: 16px; font-weight: 600; line-height: 22px; }
.ad { font: 700 7.5px "DejaVu Sans", sans-serif; text-anchor: middle; fill: #333; }
.medium { font: 700 13px "Liberation Serif", serif; text-anchor: middle; fill: #fff; }

.viewport { flex: 1; min-height: 0; display: flex; background: #fff; }
.page { width: 1286px; flex: none; display: flex; flex-direction: column; }
.form { height: 375px; padding: 43px 0 0 372px; font: 12.600px/20px "Liberation Sans", sans-serif; color: #262626; }
.row { display: flex; align-items: flex-start; }
.row label { width: 100px; flex: none; padding: 3px 7.600px 0 0; text-align: right; white-space: nowrap; }
.row label::after { content: ":"; margin-left: 1.500px; position: relative; top: -1px; }
.req::before { content: "*"; color: #f5222d; margin-right: 4px; }
.field { width: 428px; height: 29px; margin: 0; border: 1px solid #d9d9d9; border-radius: 4px; background: #fff; }
.r1 { height: 57px; } .r2 { height: 57px; } .r3 { height: 54px; } .r4 { height: 110px; }
.r3 label { padding-top: 4px; }
.r4 label { padding-top: 7px; }
.select { height: 28px; display: flex; justify-content: flex-end; align-items: center; padding-right: 11px; }
.area { height: 81px; resize: vertical; }
.add { display: block; margin-left: 100px; width: 51px; height: 29px; padding: 1px 0 0; border: 0; border-radius: 3px; background: #535cff; color: #fff; font: 12.600px/28px "Liberation Sans", sans-serif; box-shadow: 0 1px 1px #0000000b; }

.map { position: relative; height: 265px; }
.map-art { width: 1286px; height: 265px; font-family: Roboto, sans-serif; }
.snow { fill: #f3f3f5; }
.water { fill: #abcfff; }
.land { fill: #c5f6cf; }
.pale { fill: none; stroke: #f3f3f5; stroke-width: 7; stroke-linejoin: round; }
.ferry { fill: none; stroke: #8ba7eb; stroke-width: 2; stroke-dasharray: 12 8; }
.grid { stroke: #dedee2; stroke-width: 2; fill: none; }
.road { fill: none; stroke: #f5e184; stroke-width: 4.500; stroke-linejoin: round; }
.road .w { stroke: #f9e575; stroke-width: 8; }
.pt { fill: #fff; stroke: #666; stroke-width: 3; }
.pt .big { stroke: #222; stroke-width: 4; }
.s, .c, .p { paint-order: stroke; stroke: #fff; stroke-opacity: .75; stroke-width: 5; stroke-linejoin: round; }
.s { font-size: 30.500px; fill: #6b6973; }
.dark { fill: #444; }
.c { font-size: 37px; fill: #424248; }
.van { font-size: 42px; font-weight: 500; fill: #222; }
.p { font-size: 35px; fill: #168d48; }
.shield text { font-size: 26px; font-weight: 500; text-anchor: middle; fill: #555; }
.leaf-n { font-size: 22px; font-weight: 700; text-anchor: middle; fill: #0e9b62; }
.map-type { position: absolute; left: 9px; top: 9px; display: flex; height: 36px; border-radius: 2px; background: #fff; box-shadow: 0 1px 3px #0004; font: 16px/35px Roboto, sans-serif; }
.map-type b { width: 74px; text-align: center; font-weight: 500; border-right: 1px solid #e6e6e6; color: #000; }
.map-type span { width: 100px; text-align: center; color: #565656; }
.full { position: absolute; left: 1241px; top: 9px; width: 36px; height: 36px; display: grid; place-items: center; border-radius: 2px; background: #fff; box-shadow: 0 1px 3px #0004; }

.scroll { width: 15px; background: #f1f1f1; display: flex; flex-direction: column; align-items: center; }
.up { margin: 6px 0 5px; border: 4px solid transparent; border-top: 0; border-bottom: 4px solid #a3a3a3; }
.thumb { width: 11px; height: 385px; background: #c1c1c1; }
.down { margin-top: auto; margin-bottom: 6px; border: 4px solid transparent; border-bottom: 0; border-top: 4px solid #505050; }
```

FILE: terrain.js
```js
// Scatters relief facets and clearings over the land; seeded so every load is identical.
let seed = 41;
const rnd = () => (seed = (seed * 16807) % 2147483647) / 2147483647;
const host = document.getElementById('terrain');

function shards(x0, x1, y0, y1, count, size, fill, opacity, slant) {
  let d = '';
  for (let i = 0; i < count; i++) {
    const x = x0 + rnd() * (x1 - x0), y = y0 + rnd() * (y1 - y0);
    const n = 3 + Math.floor(rnd() * 4), r = size * (.35 + rnd());
    const lean = slant * (rnd() * 1.6 - .3), turn = rnd() * 3;
    for (let k = 0; k < n; k++) {
      const a = turn + (k / n) * Math.PI * 2, q = r * (.3 + rnd() * .9);
      const py = Math.sin(a) * q * .75;
      d += (k ? 'L' : 'M') + (x + Math.cos(a) * q - py * lean).toFixed(1) + ' ' + (y + py).toFixed(1);
    }
    d += 'Z';
  }
  const p = document.createElementNS('http://www.w3.org/2000/svg', 'path');
  p.setAttribute('d', d);
  p.setAttribute('fill', fill);
  p.setAttribute('opacity', opacity);
  host.appendChild(p);
}

shards(870, 1060, 503, 768, 420, 6.5, '#f3f3f5', 1, .7);
shards(950, 1060, 510, 570, 60, 4, '#c5f6cf', 1, .7);
shards(65, 240, 503, 768, 120, 6, '#f1f3f3', .9, .5);
shards(350, 500, 503, 610, 120, 7, '#f1f2f3', .85, .8);
shards(300, 390, 503, 560, 30, 5, '#f1f2f3', .85, .8);
shards(520, 720, 503, 720, 50, 4, '#f1f3f3', .7, .5);
shards(640, 790, 503, 600, 80, 6, '#f1f3f3', .8, .8);
shards(780, 880, 503, 768, 50, 4, '#f1f3f3', .7, .5);
shards(1050, 1351, 503, 768, 420, 5, '#f3f3f5', 1, .9);
shards(65, 880, 503, 768, 1700, 6.5, '#7fc795', .26, 1.2);
shards(65, 880, 503, 768, 1100, 5, '#dcffdf', .4, 1.2);
shards(880, 1351, 503, 768, 260, 8, '#9fdfb0', .25, 1);
shards(65, 520, 503, 768, 170, 4, '#d0d3d6', .45, 1);
shards(640, 740, 503, 640, 70, 4, '#d8dadc', .5, 1);
```
